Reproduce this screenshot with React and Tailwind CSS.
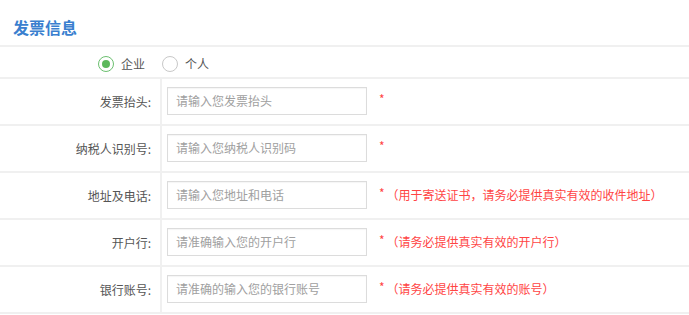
import React from "react";

const rows = [
  { label: "发票抬头:", ph: "请输入您发票抬头", note: "" },
  { label: "纳税人识别号:", ph: "请输入您纳税人识别码", note: "" },
  { label: "地址及电话:", ph: "请输入您地址和电话", note: "（用于寄送证书，请务必提供真实有效的收件地址）" },
  { label: "开户行:", ph: "请准确输入您的开户行", note: "（请务必提供真实有效的开户行）" },
  { label: "银行账号:", ph: "请准确的输入您的银行账号", note: "（请务必提供真实有效的账号）" },
];

export default function App() {
  return (
    <div
      className="w-[689px] h-[315px] bg-white overflow-hidden text-[12px]"
      style={{ fontFamily: '"Noto Sans CJK SC", "Noto Sans", sans-serif' }}
    >
      <div className="h-[45px] flex items-center pl-[13px] pt-[8px]">
        <span className="text-[16px] font-bold text-[#3a7fcf] leading-none">发票信息</span>
      </div>
      <div className="h-[2px] bg-[#f0f0f0]" />
      <div className="h-[30px] flex items-center pl-[98px] pt-[4px] text-[#555]">
        <span className="w-[16px] h-[16px] rounded-full border border-[#6cc070] flex items-center justify-center">
          <span className="w-[8px] h-[8px] rounded-full bg-[#5cb85c]" />
        </span>
        <span className="ml-[7px]">企业</span>
        <span className="ml-[17px] w-[16px] h-[16px] rounded-full border border-[#c8c8c8]" />
        <span className="ml-[7px]">个人</span>
      </div>
      {rows.map((r) => (
        <div key={r.label}>
          <div className="h-[2px] bg-[#f0f0f0]" />
          <div className="h-[45px] flex">
            <div className="w-[162px] border-r-2 border-[#f0f0f0] flex items-center justify-end pr-[9px] text-[#555]">
              {r.label}
            </div>
            <div className="flex items-center pl-[5px] -mt-[1px]">
              <div className="w-[200px] h-[28px] border border-[#dcdcdc] shadow-[inset_0_1px_1px_rgba(0,0,0,0.04)] flex items-center px-[8px] text-[#a0a0a0]">
                {r.ph}
              </div>
              <span className="ml-[12px] text-[#f44] -mt-[4px]">*</span>
              {r.note && <span className="ml-[2px] text-[#f44]">{r.note}</span>}
            </div>
          </div>
        </div>
      ))}
      <div className="h-[2px] bg-[#f0f0f0]" />
    </div>
  );
}
